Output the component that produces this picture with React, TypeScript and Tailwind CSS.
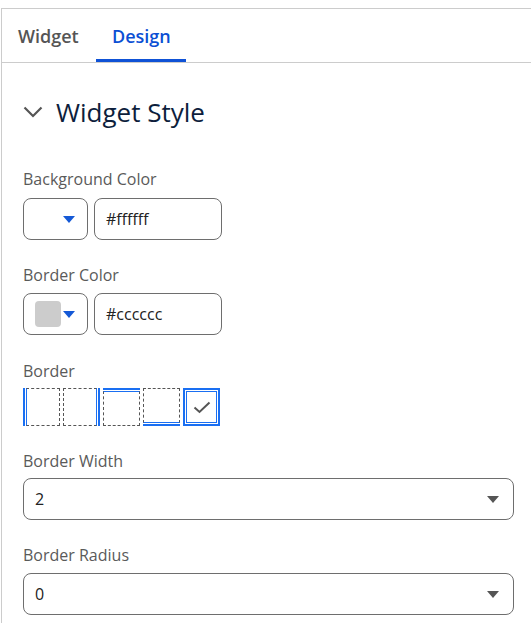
import React from "react";

const font = { fontFamily: '"Open Sans", "Noto Sans", sans-serif' };

function Label({ children, className = "" }: { children: React.ReactNode; className?: string }) {
  return <div className={"h-6 text-[16px] leading-6 text-[#5a5a5a] " + className}>{children}</div>;
}

function Caret({ color }: { color: string }) {
  return (
    <svg width="12" height="7" viewBox="0 0 12 7">
      <path d="M0 0 L12 0 L6 7 Z" fill={color} />
    </svg>
  );
}

function ColorRow({ swatch, value }: { swatch?: string; value: string }) {
  return (
    <div className="flex gap-[6px]">
      <div className="w-[65px] h-[42px] border border-[#6e6e6e] rounded-[8px] flex items-center pl-[11px] pr-[12px] justify-between">
        {swatch ? <div className="w-[26px] h-[26px] rounded-[4px]" style={{ background: swatch }} /> : <div />}
        <Caret color="#1559d6" />
      </div>
      <div className="w-[128px] h-[42px] border border-[#6e6e6e] rounded-[8px] flex items-center pl-[11px] text-[16px] text-[#222]">
        {value}
      </div>
    </div>
  );
}

function Select({ value }: { value: string }) {
  return (
    <div className="w-[491px] h-[42px] border border-[#6e6e6e] rounded-[8px] flex items-center justify-between pl-[11px] pr-[14px] text-[16px] text-[#222]">
      <span>{value}</span>
      <Caret color="#555555" />
    </div>
  );
}

const BLUE = "#1a6ff2";

export default function App() {
  return (
    <div className="w-[531px] h-[623px] bg-white pt-[8px] overflow-hidden" style={font}>
      <div className="ml-[1px] h-[615px] border-t border-l border-[#cccccc]">
        {/* Tabs */}
        <div className="flex h-[54px] border-b border-[#cccccc]">
          <div className="px-4 w-[94px] flex items-center text-[18px] font-semibold text-[#555555] pt-[2px]">Widget</div>
          <div className="relative w-[90px] px-4 flex items-center text-[18px] font-semibold text-[#0b4fd4] pt-[2px]">
            Design
            <div className="absolute left-0 right-0 bottom-0 h-[3px] bg-[#0f52d6]" />
          </div>
        </div>

        <div className="pl-[21px]">
          {/* Header */}
          <div className="flex items-center h-[36px] mt-[31px] gap-[13px]">
            <svg width="20" height="12" viewBox="0 0 20 12">
              <polyline points="1.5,1.5 10,10 18.5,1.5" fill="none" stroke="#555555" strokeWidth="2.2" />
            </svg>
            <span className="text-[26px] leading-[36px] text-[#0d1e3c]">Widget Style</span>
          </div>

          <Label className="mt-[37px] mb-[7px]">Background Color</Label>
          <ColorRow value="#ffffff" />

          <Label className="mt-[23px] mb-[6px]">Border Color</Label>
          <ColorRow swatch="#cccccc" value="#cccccc" />

          <Label className="mt-[24px] mb-[5px]">Border</Label>
          <div className="flex gap-[3px]">
            {/* left */}
            <div className="w-[37px] h-[38px] flex">
              <div className="w-[2px]" style={{ background: BLUE }} />
              <div className="w-[1px]" />
              <div className="flex-1 border border-dashed border-[#555]" style={{ borderLeft: `1px solid ${BLUE}` }} />
            </div>
            {/* right */}
            <div className="w-[37px] h-[38px] flex">
              <div className="flex-1 border border-dashed border-[#555]" style={{ borderRight: `1px solid ${BLUE}` }} />
              <div className="w-[1px]" />
              <div className="w-[2px]" style={{ background: BLUE }} />
            </div>
            {/* top */}
            <div className="w-[37px] h-[38px] flex flex-col">
              <div className="h-[2px]" style={{ background: BLUE }} />
              <div className="h-[1px]" />
              <div className="flex-1 border border-dashed border-[#555]" style={{ borderTop: `1px solid ${BLUE}` }} />
            </div>
            {/* bottom */}
            <div className="w-[37px] h-[38px] flex flex-col">
              <div className="flex-1 border border-dashed border-[#555]" style={{ borderBottom: `1px solid ${BLUE}` }} />
              <div className="h-[1px]" />
              <div className="h-[2px]" style={{ background: BLUE }} />
            </div>
            {/* all */}
            <div className="w-[37px] h-[38px] border-2 border-[#1a6ff2] p-[1px]">
              <div className="w-full h-full border border-[#1a6ff2] flex items-center justify-center">
                <svg width="18" height="13" viewBox="0 0 18 13">
                  <polyline points="1.5,6.5 6.5,11 16.5,1.5" fill="none" stroke="#555555" strokeWidth="2" />
                </svg>
              </div>
            </div>
          </div>

          <Label className="mt-[23px] mb-[5px]">Border Width</Label>
          <Select value="2" />

          <Label className="mt-[23px] mb-[6px]">Border Radius</Label>
          <Select value="0" />
        </div>
      </div>
    </div>
  );
}
